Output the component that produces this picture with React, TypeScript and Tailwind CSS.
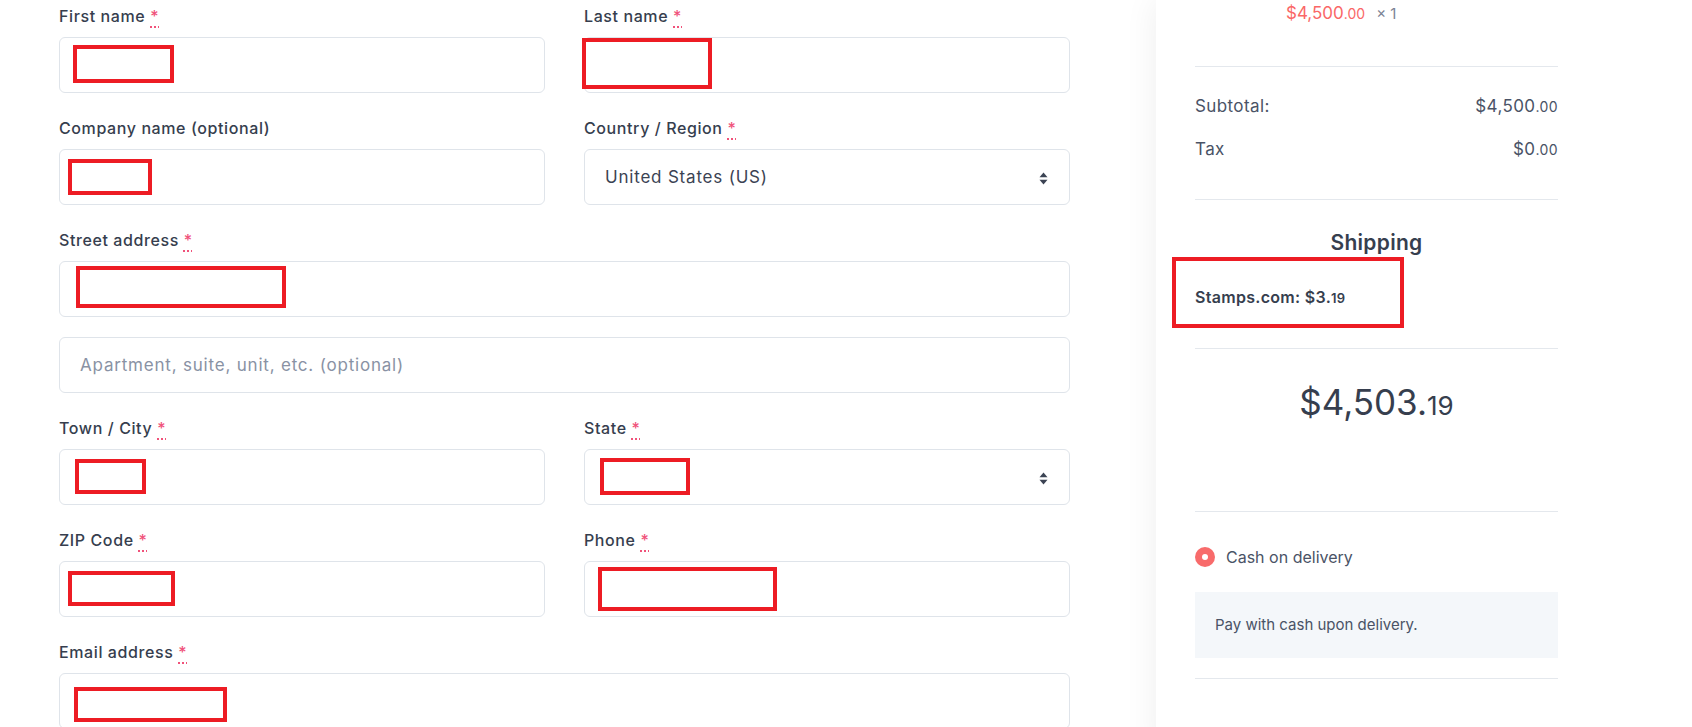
import type { ReactNode } from 'react';

type Redact = { left: number; top: number; width: number; height: number };

function RedBox({ r }: { r: Redact }) {
  return (
    <div
      className="pointer-events-none absolute border-4 border-[#ed1c24]"
      style={{ left: r.left, top: r.top, width: r.width, height: r.height }}
    />
  );
}

function SortIcon() {
  return (
    <svg width="9" height="13" viewBox="0 0 9 13" className="shrink-0">
      <path d="M4.5 0.5 L8.5 5.2 H0.5 Z" fill="#3b4353" />
      <path d="M4.5 12.5 L8.5 7.8 H0.5 Z" fill="#3b4353" />
    </svg>
  );
}

function Label({ text, required = true }: { text: string; required?: boolean }) {
  return (
    <div className="mb-[9px] h-6 text-[16px] leading-6 font-medium tracking-[0.6px] text-[#363e4e]">
      {text}
      {required && (
        <>
          {' '}
          <abbr className="text-[#f0527a] underline decoration-dotted decoration-[2px] underline-offset-[4px]">*</abbr>
        </>
      )}
    </div>
  );
}

function Input({
  redact,
  placeholder,
  value,
  select,
  className = 'mb-[23px]',
}: {
  redact?: Redact;
  placeholder?: string;
  value?: string;
  select?: boolean;
  className?: string;
}) {
  return (
    <div
      className={`relative flex h-14 items-center rounded-md border border-[#dfe4ea] bg-white pt-[2px] pl-5 pr-[21px] text-[17px] tracking-[0.8px] ${className}`}
    >
      {placeholder && <span className="text-[#8992a4]">{placeholder}</span>}
      {value && <span className="text-[#3b4353]">{value}</span>}
      <div className="flex-1" />
      {select && <SortIcon />}
      {redact && <RedBox r={redact} />}
    </div>
  );
}

function Field({
  label,
  required,
  children,
}: {
  label: string;
  required?: boolean;
  children: ReactNode;
}) {
  return (
    <div>
      <Label text={label} required={required} />
      {children}
    </div>
  );
}

function Money({ whole, cents, className, centsClass }: { whole: string; cents: string; className?: string; centsClass?: string }) {
  return (
    <span className={className}>
      {whole}
      <span className={centsClass}>.{cents}</span>
    </span>
  );
}

function Divider({ className }: { className: string }) {
  return <div className={`h-px bg-[#e4e8ed] ${className}`} />;
}

export default function App() {
  return (
    <div className="flex min-h-screen w-full overflow-hidden bg-white font-[Inter,'Noto_Sans',sans-serif] text-[#3b4353]">
      <form className="ml-[59px] w-[1011px] shrink-0 pt-[4px]">
        <div className="grid grid-cols-2 gap-x-[39px]">
          <Field label="First name">
            <Input redact={{ left: 13, top: 7, width: 101, height: 38 }} />
          </Field>
          <Field label="Last name">
            <Input redact={{ left: -3, top: 0, width: 130, height: 51 }} />
          </Field>
          <Field label="Company name (optional)" required={false}>
            <Input redact={{ left: 8, top: 9, width: 84, height: 36 }} />
          </Field>
          <Field label="Country / Region">
            <Input value="United States (US)" select />
          </Field>
        </div>
        <Field label="Street address">
          <Input className="mb-5" redact={{ left: 16, top: 4, width: 210, height: 42 }} />
        </Field>
        <Input placeholder="Apartment, suite, unit, etc. (optional)" />
        <div className="grid grid-cols-2 gap-x-[39px]">
          <Field label="Town / City">
            <Input redact={{ left: 15, top: 9, width: 71, height: 35 }} />
          </Field>
          <Field label="State">
            <Input select redact={{ left: 15, top: 8, width: 90, height: 37 }} />
          </Field>
          <Field label="ZIP Code">
            <Input redact={{ left: 8, top: 9, width: 107, height: 35 }} />
          </Field>
          <Field label="Phone">
            <Input redact={{ left: 13, top: 5, width: 179, height: 44 }} />
          </Field>
        </div>
        <Field label="Email address">
          <Input redact={{ left: 14, top: 13, width: 153, height: 35 }} />
        </Field>
      </form>

      <aside className="ml-[86px] min-h-[727px] w-[441px] shrink-0 bg-white px-[39px] shadow-[0_0_32px_rgba(0,0,0,0.07)]">
        <div className="flex h-7 items-center gap-[11px] pl-[91px] text-[17px]">
          <Money whole="$4,500" cents="00" className="text-[#fa6767]" centsClass="text-[14px]" />
          <span className="text-[15px] text-[#7b8395]">× 1</span>
        </div>
        <Divider className="mt-[38px]" />

        <div className="mt-[28px] flex h-6 items-center justify-between text-[17px] tracking-[0.4px] text-[#4a5366]">
          <span>Subtotal:</span>
          <Money whole="$4,500" cents="00" centsClass="text-[14px]" />
        </div>
        <div className="mt-[19px] flex h-6 items-center justify-between text-[17px] tracking-[0.4px] text-[#4a5366]">
          <span>Tax</span>
          <Money whole="$0" cents="00" centsClass="text-[14px]" />
        </div>
        <Divider className="mt-[37px]" />

        <div className="mt-[29px] h-7 text-center text-[21px] leading-7 font-semibold tracking-[0.3px] text-[#363e4e]">Shipping</div>
        <div className="relative mt-[28px] h-6 text-[16px] leading-6 font-semibold tracking-[0.3px] text-[#363e4e]">
          Stamps.com: $3.<span className="text-[13px]">19</span>
          <RedBox r={{ left: -23, top: -28, width: 232, height: 71 }} />
        </div>
        <Divider className="mt-[39px]" />

        <div className="mt-[33px] h-10 text-center text-[35px] leading-10 text-[#363e4e]">
          $4,503.<span className="text-[26px]">19</span>
        </div>
        <Divider className="mt-[89px]" />

        <div className="mt-[33px] flex h-6 items-center gap-[11px] text-[16px] text-[#4a5366]">
          <span className="flex h-5 w-5 items-center justify-center rounded-full bg-[#f86b6b]">
            <span className="h-[6px] w-[6px] rounded-full bg-white" />
          </span>
          Cash on delivery
        </div>
        <div className="mt-[23px] flex h-[66px] items-center bg-[#f4f7fa] pl-5 text-[15px] text-[#4a5366]">
          Pay with cash upon delivery.
        </div>
        <Divider className="mt-[20px]" />
      </aside>
      <div className="flex-1 bg-white" />
    </div>
  );
}
